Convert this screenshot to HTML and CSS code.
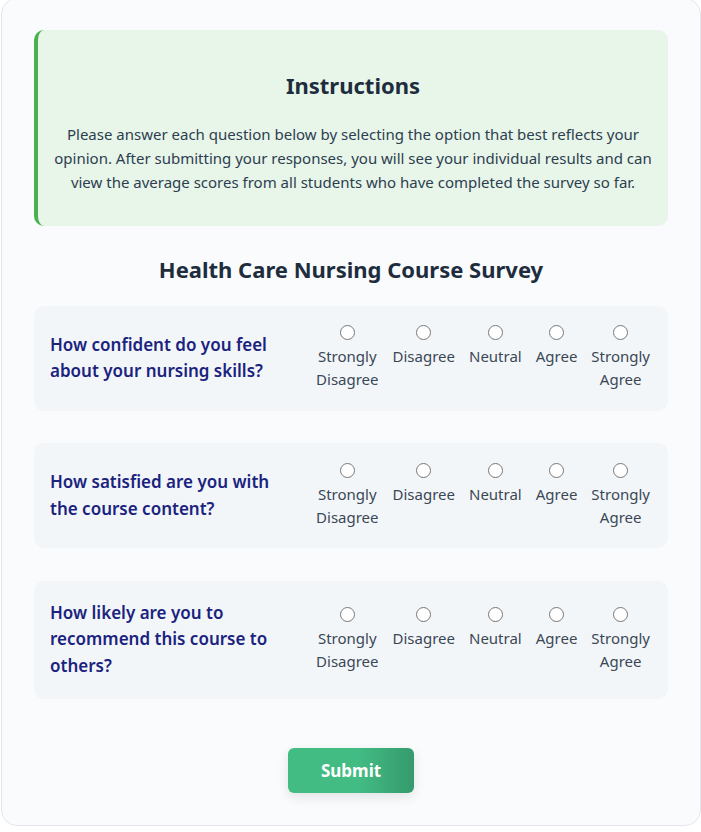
FILE: index.html
```html
<!DOCTYPE html>
<html lang="en">
<head>
<meta charset="utf-8">
<title>Health Care Nursing Course Survey</title>
<link rel="stylesheet" href="styles.css">
</head>
<body>
<div class="card">
  <div class="instructions">
    <h2 class="instructions-title">Instructions</h2>
    <p class="instructions-text">Please answer each question below by selecting the option that best reflects your opinion. After submitting your responses, you will see your individual results and can view the average scores from all students who have completed the survey so far.</p>
  </div>
  <h1 class="survey-title">Health Care Nursing Course Survey</h1>
  <form class="survey">
    <div class="question">
      <div class="question-text">How confident do you feel about your nursing skills?</div>
      <div class="options">
        <label class="option"><input type="radio" name="q1" value="1"><span>Strongly Disagree</span></label>
        <label class="option"><input type="radio" name="q1" value="2"><span>Disagree</span></label>
        <label class="option"><input type="radio" name="q1" value="3"><span>Neutral</span></label>
        <label class="option"><input type="radio" name="q1" value="4"><span>Agree</span></label>
        <label class="option"><input type="radio" name="q1" value="5"><span>Strongly Agree</span></label>
      </div>
    </div>
    <div class="question">
      <div class="question-text">How satisfied are you with the course content?</div>
      <div class="options">
        <label class="option"><input type="radio" name="q2" value="1"><span>Strongly Disagree</span></label>
        <label class="option"><input type="radio" name="q2" value="2"><span>Disagree</span></label>
        <label class="option"><input type="radio" name="q2" value="3"><span>Neutral</span></label>
        <label class="option"><input type="radio" name="q2" value="4"><span>Agree</span></label>
        <label class="option"><input type="radio" name="q2" value="5"><span>Strongly Agree</span></label>
      </div>
    </div>
    <div class="question">
      <div class="question-text">How likely are you to recommend this course to others?</div>
      <div class="options">
        <label class="option"><input type="radio" name="q3" value="1"><span>Strongly Disagree</span></label>
        <label class="option"><input type="radio" name="q3" value="2"><span>Disagree</span></label>
        <label class="option"><input type="radio" name="q3" value="3"><span>Neutral</span></label>
        <label class="option"><input type="radio" name="q3" value="4"><span>Agree</span></label>
        <label class="option"><input type="radio" name="q3" value="5"><span>Strongly Agree</span></label>
      </div>
    </div>
    <div class="actions">
      <button type="button" class="submit">Submit</button>
    </div>
  </form>
</div>
</body>
</html>
```
FILE: styles.css
```css
* { box-sizing: border-box; }

html, body {
  margin: 0;
  padding: 0;
  background: #ffffff;
}

body {
  font-family: "Noto Sans", "Open Sans", sans-serif;
  color: #2c3e50;
}

.card {
  width: 700px;
  margin: -2px 0 0 1px;
  padding: 31px 32px 32px;
  background: #f9fbfd;
  border: 1px solid #e3e7ec;
  border-radius: 16px;
}

.instructions {
  background: #e8f5e9;
  border-left: 4px solid #4caf50;
  border-radius: 10px;
  padding: 24px 14px 32px;
  text-align: center;
}

.instructions-title {
  margin: 18px 0 24px;
  font-size: 22px;
  line-height: 26px;
  font-weight: 700;
  color: #1e2d3d;
}

.instructions-text {
  margin: 0;
  font-size: 15px;
  line-height: 24px;
  color: #2c3e50;
}

.survey-title {
  margin: 30px 0 24px;
  font-size: 22px;
  line-height: 26px;
  font-weight: 700;
  text-align: center;
  color: #1e2d3d;
}

.survey {
  display: flex;
  flex-direction: column;
  gap: 32.75px;
}

.question {
  display: flex;
  align-items: center;
  background: #f3f6f9;
  border-radius: 10px;
  padding: 19.25px 18px 19.25px 16px;
}

.question-text {
  flex: 0 0 240px;
  font-size: 17px;
  line-height: 26.5px;
  font-weight: 600;
  color: #1a237e;
}

.options {
  margin-left: auto;
  display: flex;
  gap: 14px;
}

.option {
  width: min-content;
  display: flex;
  flex-direction: column;
  align-items: center;
  gap: 5px;
  font-size: 15px;
  line-height: 23px;
  color: #3a4856;
  text-align: center;
}

.option input {
  margin: 0;
  width: 15px;
  height: 15px;
}

.actions {
  display: flex;
  justify-content: center;
  padding-top: 17px;
}

.submit {
  width: 126px;
  height: 45px;
  border: none;
  border-radius: 6px;
  background: linear-gradient(90deg, #43bc84 0%, #43bc84 55%, #359a6d 100%);
  color: #ffffff;
  font-family: "Noto Sans", "Open Sans", sans-serif;
  font-size: 17px;
  font-weight: 700;
  box-shadow: 0 4px 12px rgba(0, 0, 0, 0.1);
  cursor: pointer;
}
```
